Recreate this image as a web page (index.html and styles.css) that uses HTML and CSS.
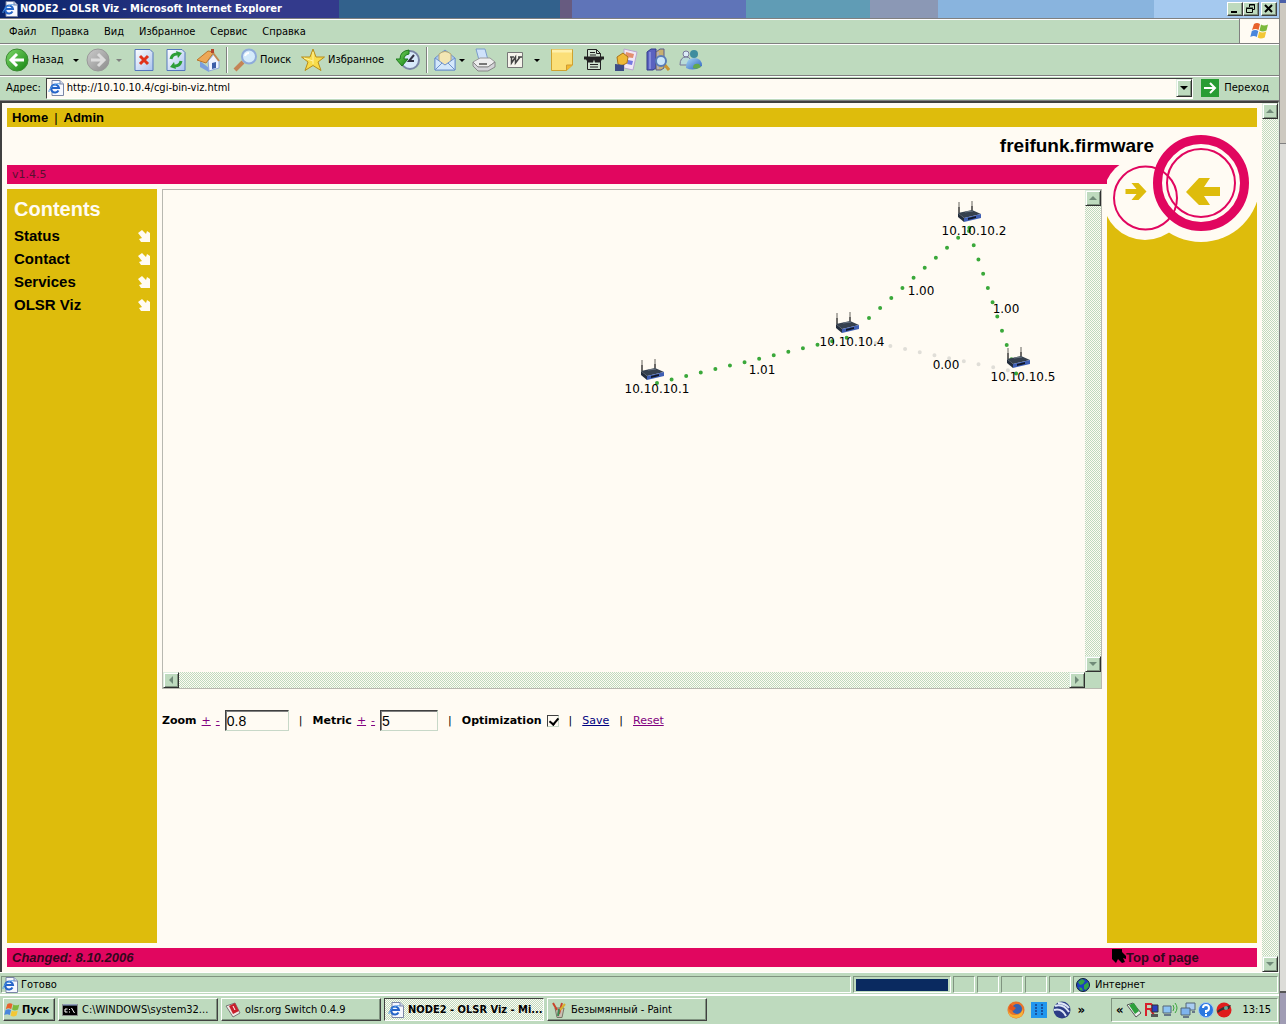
FILE: index.html
```html
<!DOCTYPE html>
<html lang="ru">
<head>
    <meta charset="UTF-8">
    <title>NODE2 - OLSR Viz</title>
    <link rel="stylesheet" href="styles.css">
</head>
<body>
    <svg class="defs" aria-hidden="true">
        <defs>
            <linearGradient id="g-green" x1="0" y1="0" x2="1" y2="1"><stop offset="0" stop-color="#7fd86a"/><stop offset="1" stop-color="#12840f"/></linearGradient>
            <linearGradient id="g-grey" x1="0" y1="0" x2="1" y2="1"><stop offset="0" stop-color="#ccc"/><stop offset="1" stop-color="#8b8b8b"/></linearGradient>
            <linearGradient id="g-page" x1="0" y1="0" x2="1" y2="1"><stop offset="0" stop-color="#fff"/><stop offset="1" stop-color="#a9c4ee"/></linearGradient>
            <linearGradient id="g-blue" x1="0" y1="0" x2="1" y2="1"><stop offset="0" stop-color="#a8d8f5"/><stop offset="1" stop-color="#2a5fc0"/></linearGradient>
        </defs>
        <symbol id="ie" viewBox="0 0 16 16">
            <path d="M4 .5h8l3.500 3.500v11.500H4z" fill="#f6f8ff" stroke="#7a86a6"/>
            <path d="M12 .5V4h3.500" fill="#cdd8f0" stroke="#7a86a6"/>
            <path d="M10.500 10.500A4 4 0 1 1 11 8H4" fill="none" stroke="#2464c8" stroke-width="2"/>
            <path d="M1 12C0 9 8 2 12 4" fill="none" stroke="#4d9be8"/>
        </symbol>
        <symbol id="flag" viewBox="0 0 20 18">
            <path d="M4 2q3-2 6 0L8.500 8q-3-2-6.500 0z" fill="#e8622c"/>
            <path d="M11 2.500q3 2 7 0L16.500 8.500q-4 2-7 0z" fill="#7cb93c"/>
            <path d="M1.800 9q3.500-2 6.500 0L6.800 15q-3-2-6.500 0z" fill="#4a87dc"/>
            <path d="M9.200 9.500q3 2 7 0L14.700 15.500q-4 2-7 0z" fill="#f3c735"/>
        </symbol>
        <symbol id="router" viewBox="0 0 26 24">
            <path d="M3 2v11M16 1v11" stroke="#67655f" stroke-width="1"/>
            <path d="M3 7v6M16 6v6" stroke="#222" stroke-width="1"/>
            <path d="M2 13l14-3 9 4-17 4z" fill="#35404e"/>
            <path d="M2 13l6 5v4l-6-5z" fill="#232d3c"/>
            <path d="M8 18l17-4v4L8 22z" fill="#3f5fb4"/>
            <path d="M12 18l8-2v2l-8 2z" fill="#10182c"/>
            <path d="M9 12l8-1" stroke="#6d7885"/>
        </symbol>
        <symbol id="se" viewBox="0 0 12 12">
            <path d="M0 3l4-3 4 4 1-3 3 2v9H3L1 9l3-1z" fill="#fffbf3"/>
        </symbol>
    </svg>

    <div class="desktop">
        <div class="screen">
            <header class="titlebar">
                <svg class="i16"><use href="#ie"/></svg>
                <h1>NODE2 - OLSR Viz - Microsoft Internet Explorer</h1>
                <button class="win" aria-label="Minimize"><svg width="12" height="10"><path d="M2 8h6" stroke="#000" stroke-width="2"/></svg></button>
                <button class="win" aria-label="Restore"><svg width="12" height="10"><path d="M4.500 3V.5h5v5H8M4 1h6M1.500 4.500h6v4h-6zM1 4h7" fill="none" stroke="#000"/></svg></button>
                <button class="win close" aria-label="Close"><svg width="12" height="10"><path d="M2 1l7 7M9 1L2 8" stroke="#000" stroke-width="2"/></svg></button>
            </header>

            <div class="menubar">
                <nav>
                    <button>Файл</button>
                    <button>Правка</button>
                    <button>Вид</button>
                    <button>Избранное</button>
                    <button>Сервис</button>
                    <button>Справка</button>
                </nav>
                <div class="throbber"><svg width="20" height="18"><use href="#flag"/></svg></div>
            </div>

            <div class="toolbar">
                <button class="t-back">
                    <svg class="i24" viewBox="0 0 24 24"><circle cx="12" cy="12" r="11" fill="url(#g-green)" stroke="#3c8a34"/><path d="M19 12H7M12 6l-6 6 6 6" fill="none" stroke="#fff" stroke-width="3"/></svg>
                    Назад <i class="caret"></i>
                </button>
                <button class="t-next" aria-label="Вперед">
                    <svg class="i24" viewBox="0 0 24 24"><circle cx="12" cy="12" r="11" fill="url(#g-grey)" stroke="#999"/><path d="M5 12h12M12 6l6 6-6 6" fill="none" stroke="#ddd" stroke-width="3"/></svg>
                    <i class="caret dim"></i>
                </button>
                <button class="t-icon" aria-label="Остановить">
                    <svg class="i24" viewBox="0 0 24 24"><path d="M3 1.500h15l3 3v18H3z" fill="url(#g-page)" stroke="#5577bd"/><path d="M8 8l8 8M16 8l-8 8" stroke="#e0331c" stroke-width="3"/></svg>
                </button>
                <button class="t-icon" aria-label="Обновить">
                    <svg class="i24" viewBox="0 0 24 24"><path d="M3 1.500h15l3 3v18H3z" fill="url(#g-page)" stroke="#5577bd"/><path d="M7 11q1-5 6-5M17 13q-1 5-6 5" fill="none" stroke="#2d9e37" stroke-width="3"/><path d="M12 3l6 2-4 5zM12 21l-6-2 4-5z" fill="#2d9e37"/></svg>
                </button>
                <button class="t-icon" aria-label="Домой">
                    <svg class="i24" viewBox="0 0 24 24"><path d="M4 13l9 7v4l-9-5z" fill="#7c9fdd"/><path d="M12 13l6-7 5 7v7l-10 3z" fill="#eef3ff" stroke="#8ea6d8"/><path d="M1 12L12 3l6 1-8 11z" fill="#eea857" stroke="#b9762e"/><path d="M17 5l6 8" stroke="#c08a52" stroke-width="2"/><path d="M15 1h3v4h-3z" fill="#b5482c"/><path d="M16 15l4-1v6l-4 1z" fill="#3c5da8"/></svg>
                </button>
                <span class="sep"></span>
                <button class="t-search">
                    <svg class="i24" viewBox="0 0 24 24"><path d="M10 14l-8 8" stroke="#c48456" stroke-width="4"/><circle cx="16" cy="8.500" r="7" fill="#d4ebfb" stroke="#8eabda" stroke-width="2"/><path d="M12 8q1-3 4-3" fill="none" stroke="#fff" stroke-width="2"/></svg>
                    Поиск
                </button>
                <button class="t-fav">
                    <svg class="i24" viewBox="0 0 24 24"><path d="M12 1l3 8h8.500l-6.500 5 3 8.500-8-5-8 5L7 14 .5 9H9z" fill="#f8dc4c" stroke="#b68d1c"/><path d="M12 4v12M3 10l9 3" stroke="#fff3a4"/></svg>
                    Избранное
                </button>
                <button class="t-icon" aria-label="Журнал">
                    <svg class="i24" viewBox="0 0 24 24"><circle cx="14" cy="12" r="9" fill="#d8eafa" stroke="#7a86a6" stroke-width="2"/><path d="M18 7l-5 6h5" fill="none" stroke="#334" stroke-width="2"/><path d="M13 2Q4 3 4 11H0l6 7 6-7H8q0-4 5-5z" fill="url(#g-green)" stroke="#1c7a1c"/></svg>
                </button>
                <span class="sep"></span>
                <button class="t-mail" aria-label="Почта">
                    <svg class="i24" viewBox="0 0 24 24"><path d="M2 10l10-8 10 8v12H2z" fill="#a9c8ee" stroke="#6f93cc"/><path d="M6 6q6-5 12 0v8l-6 4-6-4z" fill="#f3e6b4" stroke="#b4a878"/><path d="M2 10l10 7 10-7v12H2z" fill="#d4e8fb" stroke="#6f93cc"/><path d="M2 22l7-7M22 22l-7-7" stroke="#6f93cc"/></svg>
                    <i class="caret"></i>
                </button>
                <button class="t-icon" aria-label="Печать">
                    <svg class="i24" viewBox="0 0 24 24"><path d="M4 1h9l3 11H7z" fill="#cfe2fa" stroke="#7b9ccc"/><path d="M1 14l7-4h10l5 4-7 5H6z" fill="#eee" stroke="#999"/><path d="M1 14l5 5h10l7-5v5l-7 4H6l-5-5z" fill="#d4d4d8" stroke="#888"/><path d="M7 16h8" stroke="#777" stroke-width="2"/></svg>
                </button>
                <button class="t-word" aria-label="Правка в Word">
                    <svg class="i24" viewBox="0 0 24 24"><path d="M4.500 4.500h15v15h-15z" fill="#f6f4ec" stroke="#777"/><path d="M7 9h4M8.500 9v6l4-6v6L17 9M15 9h4" fill="none" stroke="#444" stroke-width="1.500"/></svg>
                    <i class="caret"></i>
                </button>
                <button class="t-icon" aria-label="Заметки">
                    <svg class="i24" viewBox="0 0 24 24"><path d="M1.500 1.500h21V17l-6 5.500h-15z" fill="#fbdf78" stroke="#cfa330"/><path d="M2 3h20" stroke="#fff0ab" stroke-width="3"/><path d="M22.500 17h-6v5.500" fill="#f3b92e" stroke="#cf9a30"/></svg>
                </button>
                <button class="t-icon" aria-label="Конфиденциальность">
                    <svg class="i24" viewBox="0 0 24 24"><path d="M5.500 1.500h9l4 4v16h-13z" fill="#cfe2cf" stroke="#222"/><path d="M14.500 1.500v4h4M8 4.500h5M8 7h6M8 16.500h8M8 19h8" fill="none" stroke="#222"/><path d="M2 8.500h20v3h-2l-2 3h-5l-1-3-1 3H6l-2-3H2z" fill="#222"/></svg>
                </button>
                <button class="t-icon" aria-label="Галерея">
                    <svg class="i24" viewBox="0 0 24 24"><path d="M10 1l13 3-4 18-9-2z" fill="#f2e8f6" stroke="#b9a5cf"/><path d="M12 4l8 2-1 4-8-1z" fill="#e38f6f"/><path d="M14 12l5 1-1 4-5-1z" fill="#7579e0"/><path d="M3 9l6-4 5 4-1 6-6 3-3-2z" fill="#efb937" stroke="#a8731c"/><path d="M1 16l9 1v6H1z" fill="#3d4c86"/></svg>
                </button>
                <button class="t-icon" aria-label="Справочные материалы">
                    <svg class="i24" viewBox="0 0 24 24"><path d="M1 4l4-3h5v19l-3 2H1z" fill="#5a62c0" stroke="#343a8c"/><path d="M10 4l4-3h4v19l-3 2h-5z" fill="#c8b070" stroke="#5a5a8a"/><path d="M4 4v17M12 4v17" stroke="#aab0f0"/><path d="M18 16l5 6" stroke="#c89432" stroke-width="3"/><circle cx="15" cy="13" r="5" fill="#c9e6fa" stroke="#587cb8" stroke-width="2"/></svg>
                </button>
                <button class="t-icon" aria-label="Messenger">
                    <svg class="i24" viewBox="0 0 24 24"><circle cx="8" cy="6" r="3" fill="#dcecf7" stroke="#779"/><path d="M2 17q0-8 6-8t5 8z" fill="#b9dcd8" stroke="#779"/><circle cx="16" cy="6" r="4" fill="#3f8d9e"/><path d="M8 20q0-10 8-10t8 8q-8 6-16 2z" fill="url(#g-blue)"/><path d="M15 20q0-5 6-4l2 3q-4 3-8 1z" fill="#63a94c"/></svg>
                </button>
            </div>

            <div class="addressbar">
                <label for="address">Адрес:</label>
                <div class="field">
                    <svg class="i16"><use href="#ie"/></svg>
                    <input id="address" type="text" value="http://10.10.10.4/cgi-bin-viz.html">
                    <button class="sb" aria-label="История адресов"><i class="arrow down dark"></i></button>
                </div>
                <button class="go">
                    <svg class="i18" viewBox="0 0 18 18"><path d="M0 0h18v18H0z" fill="#289c34"/><path d="M3 9h10M9 4l5 5-5 5" fill="none" stroke="#fff" stroke-width="2"/></svg>
                    Переход
                </button>
            </div>

            <div class="viewport">
                <div class="page">
                    <nav class="topnav">
                        <a href="#">Home</a><span>|</span><a href="#">Admin</a>
                    </nav>
                    <div class="brand">freifunk.firmware</div>
                    <div class="version">v1.4.5</div>
                    <svg class="logo" viewBox="0 0 150 116">
                        <circle cx="38" cy="71" r="42" fill="#fffbf3"/>
                        <circle cx="94" cy="56" r="59" fill="#fffbf3"/>
                        <circle cx="94" cy="56" r="43.500" fill="none" stroke="#e1065f" stroke-width="9"/>
                        <circle cx="94" cy="56" r="34" fill="none" stroke="#e1065f" stroke-width="2"/>
                        <circle cx="38.500" cy="71" r="31.500" fill="none" stroke="#e1065f" stroke-width="2"/>
                        <path d="M18.500 62h11l-5-6h7l8 8.500-8 8.500h-7l5-6h-11z" fill="#debc0c"/>
                        <path d="M79 65l13-14h11l-6 9h16v9H97l6 9H92z" fill="#debc0c"/>
                    </svg>

                    <div class="columns">
                        <aside class="contents">
                            <h2>Contents</h2>
                            <a href="#">Status<svg class="i12"><use href="#se"/></svg></a>
                            <a href="#">Contact<svg class="i12"><use href="#se"/></svg></a>
                            <a href="#">Services<svg class="i12"><use href="#se"/></svg></a>
                            <a href="#">OLSR Viz<svg class="i12"><use href="#se"/></svg></a>
                        </aside>

                        <main>
                            <div class="map">
                                <div class="canvas">
                                    <svg width="922" height="482">
                                        <g class="links">
                                            <path d="M494 193L687 147" />
                                            <path d="M706 128L817 28" />
                                            <path d="M806 41L854 186" />
                                            <path class="bad" d="M698 150L853 182"/>
                                        </g>
                                        <use href="#router" x="476" y="168" width="26" height="24"/>
                                        <use href="#router" x="671" y="121" width="26" height="24"/>
                                        <use href="#router" x="793" y="10" width="26" height="24"/>
                                        <use href="#router" x="842" y="156" width="26" height="24"/>
                                        <g class="names">
                                            <text x="494" y="203">10.10.10.1</text>
                                            <text x="689" y="156">10.10.10.4</text>
                                            <text x="811" y="45">10.10.10.2</text>
                                            <text x="860" y="191">10.10.10.5</text>
                                            <text x="599" y="184">1.01</text>
                                            <text x="758" y="105">1.00</text>
                                            <text x="843" y="123">1.00</text>
                                            <text x="783" y="179">0.00</text>
                                        </g>
                                    </svg>
                                </div>
                                <div class="vbar">
                                    <button class="sb" aria-label="Up"><i class="arrow up"></i></button>
                                    <button class="sb" aria-label="Down"><i class="arrow down"></i></button>
                                </div>
                                <div class="hbar">
                                    <button class="sb" aria-label="Left"><i class="arrow left"></i></button>
                                    <button class="sb" aria-label="Right"><i class="arrow right"></i></button>
                                </div>
                                <div class="corner"></div>
                            </div>

                            <form class="controls">
                                <label for="zoom">Zoom</label>
                                <a class="seen" href="#">+</a>
                                <a class="seen" href="#">-</a>
                                <input id="zoom" class="zoom" type="text" value="0.8">
                                <span>|</span>
                                <label for="metric">Metric</label>
                                <a class="seen" href="#">+</a>
                                <a class="seen" href="#">-</a>
                                <input id="metric" class="metric" type="text" value="5">
                                <span>|</span>
                                <label for="opt">Optimization</label>
                                <input id="opt" type="checkbox" checked>
                                <span>|</span>
                                <a href="#">Save</a>
                                <span>|</span>
                                <a class="seen" href="#">Reset</a>
                            </form>
                        </main>

                        <aside class="side"></aside>
                    </div>

                    <footer class="foot">
                        <em>Changed: 8.10.2006</em>
                        <a href="#"><svg width="14" height="16"><path d="M0 1h10v3l4 4v3l-3-1 2 4-3 1-4-4-2 4-4-4z" fill="#000"/></svg>Top of page</a>
                    </footer>
                </div>
                <div class="vbar">
                    <button class="sb" aria-label="Up"><i class="arrow up"></i></button>
                    <button class="sb" aria-label="Down"><i class="arrow down"></i></button>
                </div>
            </div>

            <div class="statusbar">
                <div class="cell ready"><svg class="i16"><use href="#ie"/></svg>Готово</div>
                <div class="cell load"><div class="bar"></div></div>
                <div class="cell"></div>
                <div class="cell"></div>
                <div class="cell"></div>
                <div class="cell"></div>
                <div class="cell"></div>
                <div class="cell zone">
                    <svg class="i14" viewBox="0 0 14 14"><circle cx="7" cy="7" r="6.500" fill="#1c3fc0" stroke="#123"/><path d="M2 4l4-3 3 2-2 3-3 1zM8 7l4-3 1 4-3 4-2-1zM3 9l3 1 1 3-3-1z" fill="#35a544"/></svg>
                    Интернет
                </div>
            </div>

            <div class="taskbar">
                <button class="start"><svg width="17" height="16"><use href="#flag"/></svg>Пуск</button>
                <button class="task">
                    <svg class="i16" viewBox="0 0 16 16"><path d="M.5 2.500h15v11H.5z" fill="#000" stroke="#888"/><path d="M1 3h14" stroke="#9ab8e8"/><path d="M5.500 7H3v3h2.500M7.500 7v1M7.500 9.500v1M9.500 6l3 5" fill="none" stroke="#fff"/></svg>
                    <span>C:\WINDOWS\system32...</span>
                </button>
                <button class="task">
                    <svg class="i16" viewBox="0 0 16 16"><path d="M1 4l9-3 5 10-7 4z" fill="#f0e9e4" stroke="#777"/><path d="M4 4l6-3 4 8-6 3z" fill="#c8202c"/><path d="M8 4l2 4" stroke="#fff"/></svg>
                    <span>olsr.org Switch 0.4.9</span>
                </button>
                <button class="task active">
                    <svg class="i16"><use href="#ie"/></svg>
                    <span>NODE2 - OLSR Viz - Mi...</span>
                </button>
                <button class="task">
                    <svg class="i16" viewBox="0 0 16 16"><path d="M4 6h9l-2 9.500H6z" fill="#c9bfb4" stroke="#776"/><path d="M6 8L2 1M8 12l3-11" stroke="#c8452c" stroke-width="2"/><path d="M9 8l5-6" stroke="#d8b02c" stroke-width="2"/><path d="M7 14l1-7" stroke="#3a8a52" stroke-width="2"/></svg>
                    <span>Безымянный - Paint</span>
                </button>
                <div class="quick">
                    <svg class="i18" viewBox="0 0 18 18"><circle cx="9" cy="9" r="8.500" fill="#e9742a"/><circle cx="10" cy="8" r="5" fill="#3563b4"/><path d="M1 8q1 6 7 6t8-6q1 9-7 9T1 8z" fill="#f6b437"/><path d="M3 3l6 4-3 3-4-2z" fill="#e3561e"/></svg>
                    <svg class="i16" viewBox="0 0 16 16"><path d="M0 0h16v16H0z" fill="#2196ee"/><path d="M5 2v11M11 2v11" stroke="#115" stroke-dasharray="2 1"/></svg>
                    <svg class="i18" viewBox="0 0 18 18"><circle cx="9" cy="9" r="8.500" fill="#2c3c86"/><path d="M2 5q8-3 14 6M1 9q8-2 12 6M5 2q7 0 11 5" fill="none" stroke="#dde6f6" stroke-width="2"/></svg>
                    <b>»</b>
                </div>
                <div class="tray">
                    <b>«</b>
                    <svg class="i16" viewBox="0 0 16 16"><path d="M1 3l6-2 8 10-5 4z" fill="#eee" stroke="#555"/><path d="M3 3l5-2 5 8-4 3z" fill="#2da03c"/></svg>
                    <svg class="i16" viewBox="0 0 16 16"><path d="M2 14V2h5q3 3 0 5H3M6 7l4 6" fill="none" stroke="#d8202c" stroke-width="2"/><path d="M8 3h6v7H8z" fill="#2a3fc0" stroke="#333"/><path d="M7 12h7v3H7z" fill="#555"/></svg>
                    <svg class="i16" viewBox="0 0 16 16"><path d="M1 4h8v7H1z" fill="#8cc3f2" stroke="#567"/><path d="M2 13h7" stroke="#678" stroke-width="2"/><path d="M11 3q2 3 0 6M13 1q4 5 0 10" fill="none" stroke="#3aa53c"/></svg>
                    <svg class="i16" viewBox="0 0 16 16"><path d="M6 1h9v7H6z" fill="#a9cdf2" stroke="#567"/><path d="M1 6h9v7H1z" fill="#7fb4ee" stroke="#567"/><path d="M3 15h6M12 10h3" stroke="#678" stroke-width="2"/></svg>
                    <svg class="i16" viewBox="0 0 16 16"><circle cx="8" cy="8" r="7.500" fill="#2b78e0" stroke="#a8c8f0"/><path d="M5 6q0-3 3-3t3 3-3 3v2M8 12v2" fill="none" stroke="#fff" stroke-width="2"/></svg>
                    <svg class="i16" viewBox="0 0 16 16"><circle cx="8" cy="8" r="7.500" fill="#df1c1c"/><path d="M1 9q4-4 14-6l-2 4q-7 0-11 4z" fill="#333"/><circle cx="10" cy="6" r="2" fill="#6a9"/></svg>
                    <time>13:15</time>
                </div>
            </div>
        </div>
        <div class="behind">
            <div class="b-title"></div>
            <div class="b-tools"></div>
            <div class="b-body"></div>
            <div class="b-desk"></div>
        </div>
    </div>
</body>
</html>
```
FILE: styles.css
```css
*{
    box-sizing: border-box;
    padding: 0;
    margin: 0;
}
body{
    font: 11px/14px "DejaVu Sans Condensed", "DejaVu Sans", sans-serif;
    color: #000;
    background: #bedabe;
}
button{
    display: flex;
    align-items: center;
    border: 0;
    background: none;
    font: inherit;
    color: inherit;
    white-space: nowrap;
}
input{
    font: inherit;
    color: inherit;
    min-width: 0;
}
a{
    color: #000;
    text-decoration: none;
}
svg{
    display: block;
    flex: none;
}
.defs{
    position: absolute;
    width: 0;
    height: 0;
}
.i12{ width: 12px; height: 12px; }
.i14{ width: 14px; height: 14px; }
.i16{ width: 16px; height: 16px; }
.i18{ width: 18px; height: 18px; }
.i24{ width: 24px; height: 24px; }

.desktop{
    display: flex;
    min-height: 100vh;
}
.screen{
    flex: 1;
    min-width: 0;
    display: flex;
    flex-direction: column;
    border-right: 1px solid #808080;
}

/* title bar */
.titlebar{
    display: flex;
    align-items: center;
    height: 18px;
    padding: 0 2px;
    background: linear-gradient(90deg, #0a246a 0, #333a8c 20%, #333a8c 26.5%, #32618c 26.5%, #32618c 43.8%, #675b80 43.8%, #675b80 44.7%, #5f74b8 44.7%, #5f74b8 58.3%, #609cb5 58.3%, #609cb5 68%, #8b98b5 68%, #8b98b5 73.3%, #89b4de 73.3%, #89b4de 90.2%, #a5c9ef 90.2%);
}
.titlebar h1{
    flex: 1;
    padding-left: 2px;
    font-size: 11px;
    color: #fff;
}
.win{
    justify-content: center;
    width: 16px;
    height: 14px;
    background: #bedabe;
    border: 1px solid;
    border-color: #fff #404040 #404040 #fff;
    box-shadow: inset -1px -1px #809480;
}
.close{
    margin-left: 2px;
}

/* menu */
.menubar{
    display: flex;
    height: 26px;
    border-top: 1px solid #808080;
    border-bottom: 1px solid #808080;
    box-shadow: inset 0 1px #fff;
}
.menubar nav{
    flex: 1;
    display: flex;
    gap: 15px;
    padding: 2px 0 0 9px;
    border-right: 1px solid #808080;
}
.throbber{
    display: flex;
    align-items: center;
    justify-content: center;
    width: 39px;
    background: #fffbf3;
}

/* toolbar */
.toolbar{
    display: flex;
    align-items: center;
    height: 32px;
    padding-left: 2px;
    border-top: 1px solid #fff;
    border-bottom: 1px solid #808080;
}
.toolbar button{
    flex: none;
    gap: 3px;
    height: 28px;
    padding-left: 3px;
}
.toolbar .t-back{ width: 82px; }
.toolbar .t-next{ width: 44px; padding-left: 2px; gap: 6px; }
.toolbar .t-icon{ width: 32px; justify-content: center; padding: 0; }
.toolbar .t-search{ width: 68px; }
.toolbar .t-fav{ width: 94px; }
.toolbar .t-mail{ width: 38px; gap: 2px; }
.toolbar .t-word{ width: 46px; gap: 7px; }
.caret{
    border: 3px solid transparent;
    border-top-color: #000;
    border-bottom: 0;
}
.t-back .caret{
    margin-left: 6px;
}
.dim{
    border-top-color: #808080;
}
.sep{
    width: 2px;
    height: 26px;
    margin: 0 2px;
    border-left: 1px solid #808080;
    border-right: 1px solid #fff;
}

/* address */
.addressbar{
    display: flex;
    align-items: center;
    gap: 5px;
    height: 25px;
    padding: 1px 10px 2px 6px;
    border-top: 1px solid #fff;
    border-bottom: 1px solid #808080;
}
.field{
    flex: 1;
    display: flex;
    align-items: center;
    height: 21px;
    padding-left: 1px;
    background: #fffbf3;
    border: 1px solid;
    border-color: #404040 #fff #fff #404040;
}
.field input{
    flex: 1;
    padding-left: 3px;
    border: 0;
    background: none;
}
.go{
    gap: 5px;
    padding-left: 3px;
}

/* scrollbars */
.sb{
    flex: none;
    justify-content: center;
    width: 16px;
    height: 16px;
    background: #bedabe;
    border: 1px solid;
    border-color: #dfeedf #303030 #303030 #dfeedf;
    box-shadow: inset 1px 1px #fff, inset -1px -1px #809480;
}
.field .sb{
    height: 18px;
}
.vbar, .hbar{
    display: flex;
    justify-content: space-between;
    background: repeating-conic-gradient(#bedabe 0 25%, #fffbf3 0 50%) 0 0 / 2px 2px;
}
.vbar{
    flex-direction: column;
    width: 16px;
}
.arrow{
    border: 4px solid transparent;
}
.up{ border-bottom-color: #708a78; border-top: 0; }
.down{ border-top-color: #708a78; border-bottom: 0; }
.left{ border-right-color: #708a78; border-left: 0; }
.right{ border-left-color: #708a78; border-right: 0; }
.dark{ border-top-color: #000; }

/* page */
.viewport{
    flex: 1;
    display: flex;
    background: #fffbf3;
    border-top: 2px solid #404040;
    border-left: 2px solid #404040;
    border-right: 1px solid #dfeedf;
}
.page{
    flex: 1;
    min-width: 0;
    display: flex;
    flex-direction: column;
    position: relative;
    padding: 5px;
    font-family: "DejaVu Sans", sans-serif;
}
.topnav{
    display: flex;
    gap: 6px;
    padding-left: 5px;
    height: 19px;
    font: 13px/19px "Liberation Sans", Arial, sans-serif;
    background: #debc0c;
}
.topnav a{
    font-weight: bold;
}
.brand{
    height: 38px;
    padding-right: 103px;
    text-align: right;
    font: bold 19px/38px "Liberation Sans", Arial, sans-serif;
}
.version{
    height: 19px;
    padding-left: 5px;
    line-height: 20px;
    color: #5a1030;
    background: #e1065f;
}
.logo{
    position: absolute;
    top: 24px;
    right: 5px;
    width: 150px;
    height: 116px;
}
.columns{
    flex: 1;
    display: flex;
    gap: 5px;
    padding: 5px 0;
}
.contents, .side{
    flex: none;
    width: 150px;
    background: #debc0c;
}
.contents{
    padding: 8px 7px;
    font-family: "Liberation Sans", Arial, sans-serif;
    font-weight: bold;
}
.contents h2{
    font-size: 20px;
    line-height: 24px;
    margin-bottom: 3px;
    color: #fffbf3;
}
.contents a{
    display: flex;
    align-items: center;
    justify-content: space-between;
    font-size: 15px;
    line-height: 23px;
}
main{
    flex: 1;
    min-width: 0;
}
.map{
    display: grid;
    grid-template-columns: minmax(0, 1fr) 16px;
    grid-template-rows: 482px 16px;
    border: 1px solid #b8b8b0;
}
.canvas{
    overflow: hidden;
}
.corner{
    background: #bedabe;
}
.links path{
    fill: none;
    stroke: #3aa83a;
    stroke-width: 4;
    stroke-linecap: round;
    stroke-dasharray: 0 15;
}
.links .bad{
    stroke: #e0ded8;
}
.names{
    font-size: 12px;
    text-anchor: middle;
}
.controls{
    display: flex;
    align-items: center;
    gap: 5px;
    margin-top: 21px;
}
.controls label{
    font-weight: bold;
}
.controls span{
    margin: 0 5px;
}
.controls a{
    color: #000080;
    text-decoration: underline;
}
.controls .seen{
    color: #800080;
}
.controls input[type=text]{
    height: 21px;
    padding-left: 1px;
    font: 14px "Liberation Sans", Arial, sans-serif;
    background: #fffbf3;
    border: 1px solid;
    border-color: #404040 #c8d8c8 #c8d8c8 #404040;
    box-shadow: inset 1px 1px #808080;
}
.controls .zoom{ width: 64px; }
.controls .metric{ width: 58px; }
.controls input[type=checkbox]{
    appearance: none;
    width: 12px;
    height: 12px;
    border: 1px solid;
    border-color: #404040 #c8d8c8 #c8d8c8 #404040;
    background: #fffbf3;
}
.controls input[type=checkbox]:checked::before{
    content: "";
    display: block;
    width: 4px;
    height: 7px;
    margin-left: 3px;
    border: solid #000;
    border-width: 0 2px 2px 0;
    transform: rotate(40deg);
}
.foot{
    display: flex;
    justify-content: space-between;
    height: 19px;
    padding-left: 5px;
    font: bold 13px/19px "Liberation Sans", Arial, sans-serif;
    color: #33081c;
    background: #e1065f;
}
.foot a{
    display: flex;
    width: 145px;
    color: #33081c;
}

/* status bar */
.statusbar{
    display: flex;
    gap: 2px;
    height: 23px;
    padding: 3px 1px 1px;
    border-top: 1px solid #fff;
    border-bottom: 1px solid #fff;
}
.cell{
    display: flex;
    align-items: center;
    width: 22px;
    border: 1px solid;
    border-color: #809480 #fff #fff #809480;
}
.ready{
    flex: 1;
    gap: 3px;
}
.load{
    width: 98px;
    padding: 0 2px;
}
.bar{
    width: 92px;
    height: 12px;
    background: #0a2a60;
}
.zone{
    width: 205px;
    gap: 5px;
    padding-left: 2px;
}

/* taskbar */
.taskbar{
    display: flex;
    align-items: center;
    gap: 3px;
    height: 29px;
    padding: 1px 1px 2px 3px;
    border-top: 1px solid #fff;
}
.start, .task{
    height: 23px;
    border: 1px solid;
    border-color: #fff #404040 #404040 #fff;
    box-shadow: inset -1px -1px #809480;
}
.start{
    gap: 1px;
    width: 52px;
    font-weight: bold;
}
.task{
    flex: 0 1 160px;
    min-width: 0;
    gap: 4px;
    padding-left: 3px;
}
.task span{
    overflow: hidden;
}
.active{
    font-weight: bold;
    background: repeating-conic-gradient(#bedabe 0 25%, #fffbf3 0 50%) 0 0 / 2px 2px;
    border-color: #404040 #fff #fff #404040;
    box-shadow: none;
}
.quick{
    display: flex;
    align-items: center;
    gap: 6px;
    margin-left: auto;
    padding-right: 23px;
}
.quick b, .tray b{
    font-size: 13px;
}
.tray{
    display: flex;
    align-items: center;
    gap: 2px;
    width: 167px;
    height: 24px;
    padding: 0 6px 0 4px;
    border: 1px solid;
    border-color: #809480 #fff #fff #809480;
}
.tray time{
    margin-left: auto;
}

/* window showing behind */
.behind{
    display: flex;
    flex-direction: column;
    width: 6px;
    background: #dcdcd8;
}
.b-title{ height: 3px; background: #4a5fa8; }
.b-tools{ height: 141px; background: #cdc9c0; border-bottom: 1px solid #808080; }
.b-body{ flex: 1; border-bottom: 2px solid #555; }
.b-desk{ height: 31px; background: #a09cb4; }
```
